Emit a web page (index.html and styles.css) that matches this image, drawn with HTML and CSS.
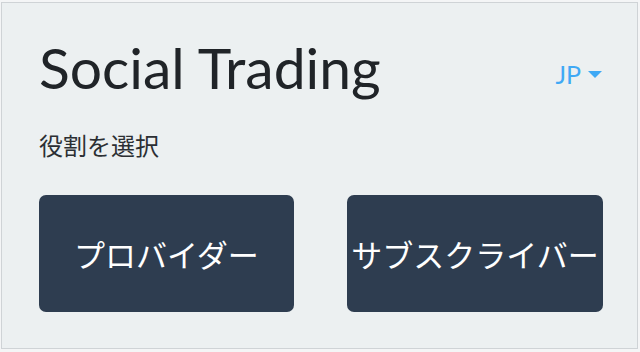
FILE: index.html
```html
<!DOCTYPE html>
<html lang="ja">
<head>
    <meta charset="UTF-8">
    <meta name="viewport" content="width=device-width, initial-scale=1.0">
    <title>Social Trading</title>
    <link rel="stylesheet" href="styles.css">
</head>
<body>

    <div class="card">
        <!-- ヘッダー -->
        <div class="header">
            <h1 class="title">Social Trading</h1>
            <div class="lang">JP <span class="caret"></span></div>
        </div>

        <p class="subtitle">役割を選択</p>

        <!-- 役割ボタン -->
        <div class="roles">
            <button class="role-btn">プロバイダー</button>
            <button class="role-btn">サブスクライバー</button>
        </div>
    </div>

</body>
</html>
```

FILE: styles.css
```css
body {
    margin: 0;
    padding: 2px 2px 1px 1px;
    background-color: #f4f5f6;
    font-family: Lato, "Noto Sans CJK JP", sans-serif;
}

.card {
    height: 347px;
    box-sizing: border-box;
    border: 1px solid #cfd3d6;
    background-color: #ecf0f1;
    padding: 0 34px 0 37px;
}

.header {
    display: flex;
    justify-content: space-between;
    align-items: flex-start;
    height: 124px;
}

.title {
    margin: 36px 0 0 0;
    font-size: 57px;
    font-weight: 400;
    line-height: 1;
    color: #202428;
}

.lang {
    margin-top: 56px;
    margin-right: 1px;
    font-size: 25px;
    color: #3fa9f5;
    display: flex;
    align-items: center;
    gap: 7px;
}

/* 下向きの三角 */
.caret {
    width: 0;
    height: 0;
    border-left: 7.5px solid transparent;
    border-right: 7.5px solid transparent;
    border-top: 7px solid #3fa9f5;
}

.subtitle {
    margin: 0;
    font-family: "Noto Sans CJK JP", sans-serif;
    font-size: 24px;
    line-height: 1.5;
    color: #2b2f33;
}

.roles {
    display: grid;
    grid-template-columns: 255px 256px;
    justify-content: space-between;
    margin-top: 32px;
}

.role-btn {
    height: 117px;
    border: none;
    border-radius: 7px;
    background-color: #2e3d50;
    color: #fff;
    font-family: "Noto Sans CJK JP", sans-serif;
    font-size: 31px;
    white-space: nowrap;
    padding: 0;
    display: flex;
    justify-content: center;
    align-items: center;
}
```
